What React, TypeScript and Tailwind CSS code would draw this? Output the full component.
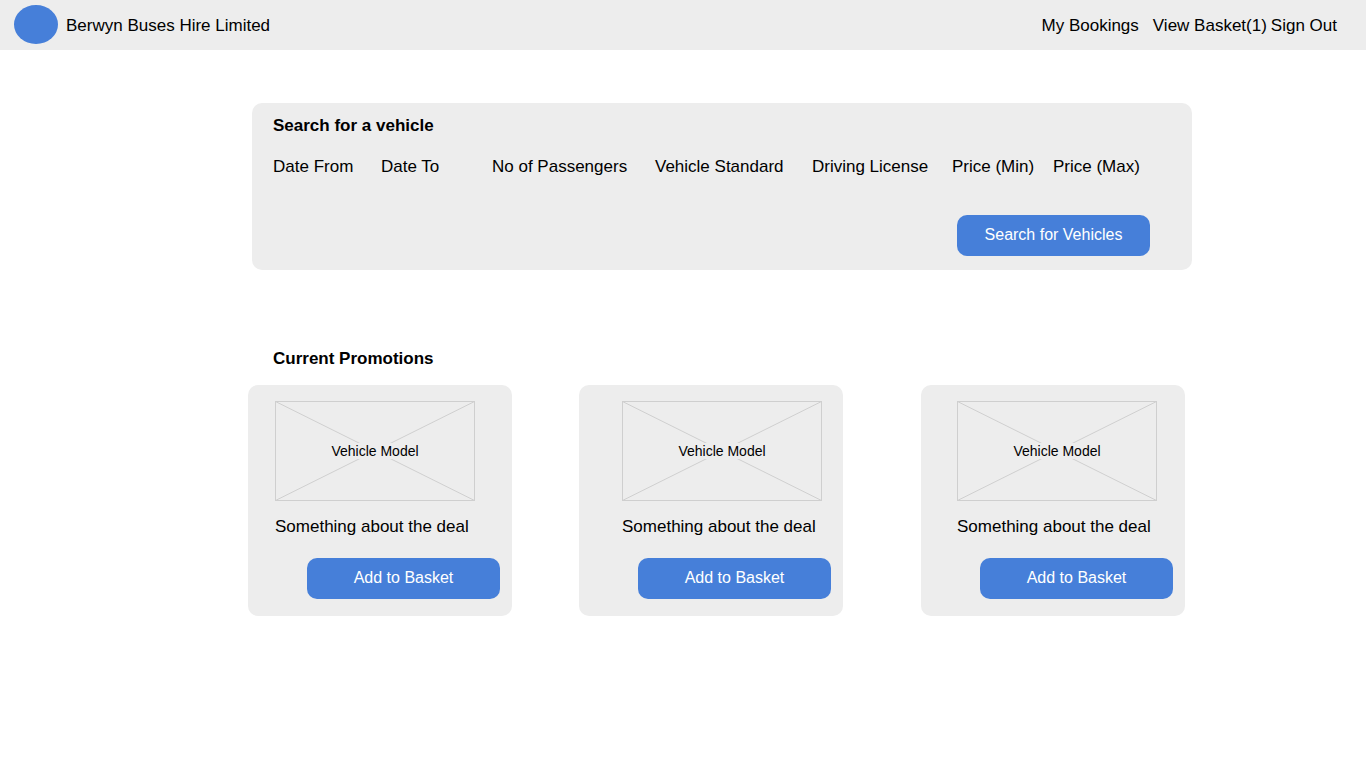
interface Promotion {
  id: number;
  model: string;
  description: string;
  inset: string;
}

const searchFields = [
  "Date From",
  "Date To",
  "No of Passengers",
  "Vehicle Standard",
  "Driving License",
  "Price (Min)",
  "Price (Max)",
];

const promotions: Promotion[] = [
  { id: 1, model: "Vehicle Model", description: "Something about the deal", inset: "pl-[27px]" },
  { id: 2, model: "Vehicle Model", description: "Something about the deal", inset: "pl-[43px]" },
  { id: 3, model: "Vehicle Model", description: "Something about the deal", inset: "pl-9" },
];

function ActionButton({ children }: { children: string }) {
  return (
    <button
      type="button"
      className="h-[41px] w-[193px] cursor-pointer rounded-[10px] bg-[#467fd9] pb-0.5 text-base text-white"
    >
      {children}
    </button>
  );
}

function VehiclePlaceholder({ label }: { label: string }) {
  return (
    <div className="grid h-[100px] w-[200px] place-items-center">
      <svg
        aria-hidden="true"
        viewBox="0 0 200 100"
        className="col-start-1 row-start-1 h-full w-full"
        fill="none"
        stroke="#cfcfcf"
      >
        <path d="M.5 .5 199.5 99.5M199.5 .5 .5 99.5" />
        <rect x=".5" y=".5" width="199" height="99" />
      </svg>
      <span className="z-10 col-start-1 row-start-1 bg-[#ededed] text-sm leading-4">
        {label}
      </span>
    </div>
  );
}

function PromotionCard({ promotion }: { promotion: Promotion }) {
  return (
    <article className="w-[264px] rounded-[10px] bg-[#ededed] pt-4 pb-[17px]">
      <div className={promotion.inset}>
        <VehiclePlaceholder label={promotion.model} />
        <p className="mt-[15px]">{promotion.description}</p>
      </div>
      <div className="mt-5 flex justify-end pr-3">
        <ActionButton>Add to Basket</ActionButton>
      </div>
    </article>
  );
}

export default function App() {
  return (
    <div className="min-h-screen bg-white font-['Liberation_Sans',Arial,sans-serif] text-[17px] leading-[22px] text-black">
      <header className="flex h-[50px] items-center justify-between bg-[#ededed] pr-[29px] pl-3.5">
        <a href="#home" className="flex items-center gap-2">
          <svg aria-hidden="true" viewBox="0 0 44 39" className="mb-px h-[39px] w-11">
            <ellipse cx="22" cy="19.5" rx="22" ry="19.5" fill="#467fd9" />
          </svg>
          <span className="pt-0.5">Berwyn Buses Hire Limited</span>
        </a>
        <nav className="flex items-center gap-1 pt-0.5">
          <a href="#bookings" className="mr-2.5">My Bookings</a>
          <a href="#basket">View Basket(1)</a>
          <a href="#sign-out">Sign Out</a>
        </nav>
      </header>

      <main className="ml-[248px] max-w-[944px] pt-[53px] pb-12">
        <section className="ml-1 rounded-[10px] bg-[#ededed] pt-3 pr-[42px] pb-3.5 pl-[21px]">
          <h1 className="font-bold">Search for a vehicle</h1>
          <ul className="mt-[19px] grid grid-cols-[108px_111px_163px_157px_140px_101px_auto] whitespace-nowrap">
            {searchFields.map((field) => (
              <li key={field}>{field}</li>
            ))}
          </ul>
          <div className="mt-[37px] flex justify-end">
            <ActionButton>Search for Vehicles</ActionButton>
          </div>
        </section>

        <section className="mt-[78px]">
          <h2 className="ml-[25px] font-bold">Current Promotions</h2>
          <div className="mt-[15px] grid grid-cols-[331px_342px_264px]">
            {promotions.map((promotion) => (
              <PromotionCard key={promotion.id} promotion={promotion} />
            ))}
          </div>
        </section>
      </main>
    </div>
  );
}
